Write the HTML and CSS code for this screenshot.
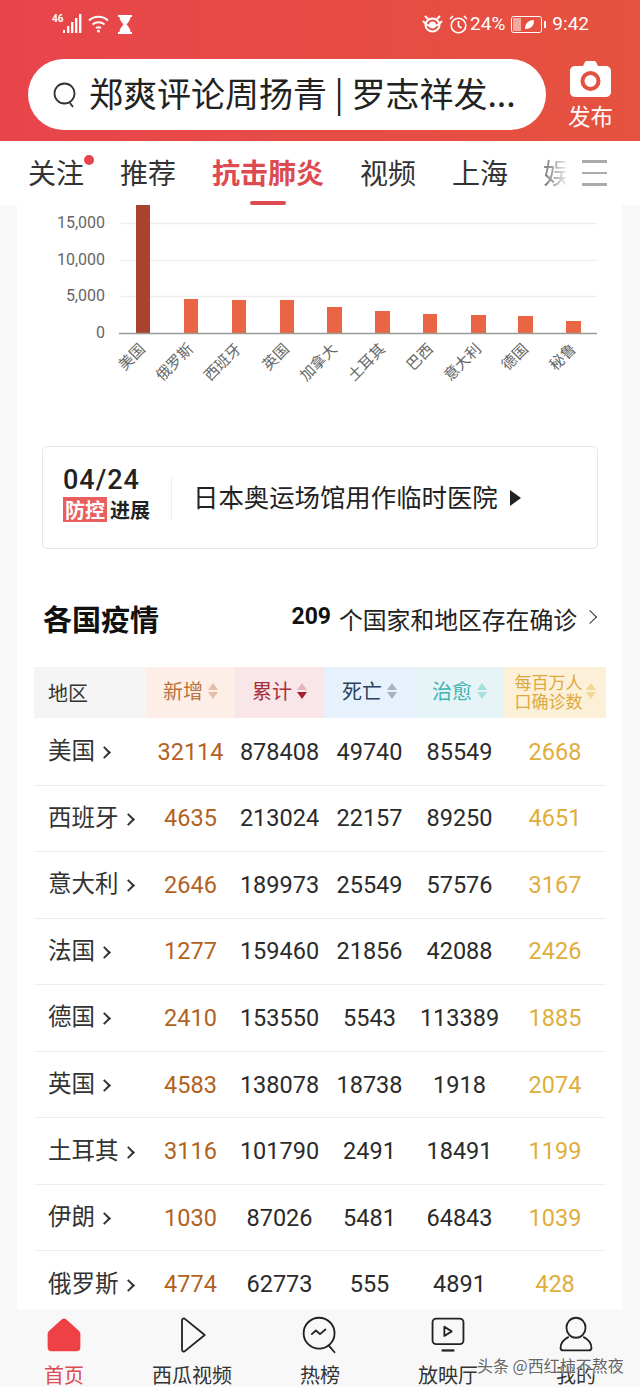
FILE: index.html
```html
<!DOCTYPE html>
<html lang="zh">
<head>
<meta charset="utf-8">
<title>各国疫情</title>
<link rel="stylesheet" href="styles.css">
</head>
<body>
<header class="top">
    <div class="status">
        <div class="status-left">
            <span class="net">46</span>
            <svg width="20" height="20" viewBox="0 0 20 20" fill="#fff"><rect x="0" y="16" width="2" height="3"/><rect x="4" y="12" width="2.4" height="7"/><rect x="8" y="8" width="2.4" height="11"/><rect x="12" y="4" width="2.4" height="15"/><rect x="16" y="0" width="2.4" height="19"/></svg>
            <svg class="wifi" width="22" height="20" viewBox="0 0 22 20" fill="none" stroke="#fff" stroke-width="2"><path d="M1 6.500C6.500 1.500 14.500 1.500 20 6.500"/><path d="M4.500 10.500C8 7.500 13 7.500 16.500 10.500"/><path d="M8 14C9.500 13 11.500 13 13 14"/><circle cx="10.500" cy="17" r="1.500" fill="#fff" stroke="none"/></svg>
            <svg width="16" height="19" viewBox="0 0 16 19" fill="#fff"><path d="M1 0h14v2h-1.500c0 3-2 5-4 7.500 2 2 4 4.500 4 7.500H15v2H1v-2h1.500c0-3 2-5.500 4-7.500-2-2.500-4-4.500-4-7.500H1z"/></svg>
        </div>
        <div class="status-right">
            <svg width="21" height="18" viewBox="0 0 21 18" fill="none" stroke="#fff" stroke-width="2"><path d="M1 6c5 7 14 7 19 0"/><ellipse cx="10.500" cy="10" rx="7" ry="6.500"/><circle cx="10.500" cy="10" r="2.500" fill="#fff"/><path d="M3 1l3 3M18 1l-3 3"/></svg>
            <svg class="alarm" width="19" height="19" viewBox="0 0 19 19" fill="none" stroke="#fff" stroke-width="1.600"><circle cx="9.500" cy="10.500" r="7.300"/><path d="M9.500 6v5l3 2M1 4l3-3M18 4l-3-3"/></svg>
            <span class="pct">24%</span>
            <svg class="battery" width="35" height="17" viewBox="0 0 35 17"><rect x="0.500" y="0.500" width="30" height="16" rx="2" fill="none" stroke="#fff"/><rect x="2" y="2" width="8" height="13" fill="#fff" opacity="0.5"/><path d="M14 13c0-6 4-9 9-9 0 6-3 9-9 9z" fill="#fff"/><rect x="33" y="5" width="2" height="7" fill="#fff"/></svg>
            <span class="clock">9:42</span>
        </div>
    </div>
    <div class="search-row">
        <div class="search">
            <svg width="26" height="28" viewBox="0 0 26 28" fill="none" stroke="#333" stroke-width="1.800"><circle cx="12.500" cy="12.500" r="10"/><path d="M18 22l3 4"/></svg>
            <span class="search-text">郑爽评论周扬青 | 罗志祥发...</span>
        </div>
        <div class="publish">
            <svg width="41" height="36" viewBox="0 0 41 36"><path d="M5 5h8l2-4c.3-.6.800-1 1.500-1h8c.7 0 1.200.4 1.500 1l2 4h8c2.800 0 5 2.200 5 5v21c0 2.800-2.200 5-5 5H5c-2.800 0-5-2.200-5-5V10c0-2.800 2.200-5 5-5z" fill="#fff"/><circle cx="20.500" cy="20" r="8" fill="none" stroke="#e5503f" stroke-width="4"/></svg>
            <span>发布</span>
        </div>
    </div>
</header>

<nav class="tabs">
    <span class="tab has-dot">关注</span>
    <span class="tab">推荐</span>
    <span class="tab active">抗击肺炎</span>
    <span class="tab">视频</span>
    <span class="tab">上海</span>
    <span class="tab fade">娱</span>
    <div class="menu"><i></i><i></i><i></i></div>
</nav>

<main>
    <div class="card">
        <svg class="chart" width="605" height="241" viewBox="17 205 605 241">
            <g class="grid">
                <path d="M121 223.500H597M121 260.500H597M121 296.500H597"/>
            </g>
            <g class="ticks">
                <text x="105" y="228">15,000</text>
                <text x="105" y="265">10,000</text>
                <text x="105" y="301">5,000</text>
                <text x="105" y="338">0</text>
            </g>
            <rect x="136" y="205" width="14" height="128" fill="#a9432e"/>
            <g fill="#e96544">
                <rect x="184" y="299" width="14" height="34"/>
                <rect x="232" y="300" width="14" height="33"/>
                <rect x="280" y="300" width="14" height="33"/>
                <rect x="327" y="307" width="15" height="26"/>
                <rect x="375" y="311" width="15" height="22"/>
                <rect x="423" y="314" width="14" height="19"/>
                <rect x="471" y="315" width="15" height="18"/>
                <rect x="518" y="316" width="15" height="17"/>
                <rect x="566" y="321" width="15" height="12"/>
            </g>
            <path class="axis" d="M119 333.500H597"/>
            <g class="labels">
                <text transform="translate(146 350) rotate(-45)">美国</text>
                <text transform="translate(194 350) rotate(-45)">俄罗斯</text>
                <text transform="translate(242 350) rotate(-45)">西班牙</text>
                <text transform="translate(290 350) rotate(-45)">英国</text>
                <text transform="translate(338 350) rotate(-45)">加拿大</text>
                <text transform="translate(386 350) rotate(-45)">土耳其</text>
                <text transform="translate(434 350) rotate(-45)">巴西</text>
                <text transform="translate(482 350) rotate(-45)">意大利</text>
                <text transform="translate(529 350) rotate(-45)">德国</text>
                <text transform="translate(577 350) rotate(-45)">秘鲁</text>
            </g>
        </svg>

        <div class="notice">
            <div class="notice-date">
                <div class="date">04/24</div>
                <div class="tag"><b>防控</b><span>进展</span></div>
            </div>
            <div class="notice-text">日本奥运场馆用作临时医院</div>
            <span class="notice-arrow"></span>
        </div>

        <div class="section-head">
            <h2>各国疫情</h2>
            <div class="section-more"><b>209</b><span>个国家和地区存在确诊</span><i class="chev"></i></div>
        </div>

        <div class="table">
            <div class="thead">
                <div class="th th-area">地区</div>
                <div class="th th-new">新增<span class="sort"></span></div>
                <div class="th th-total">累计<span class="sort"></span></div>
                <div class="th th-dead">死亡<span class="sort"></span></div>
                <div class="th th-cure">治愈<span class="sort"></span></div>
                <div class="th th-rate"><span class="two">每百万人<br>口确诊数</span><span class="sort"></span></div>
            </div>
            <div class="row"><div class="area">美国<i></i></div><div class="new">32114</div><div>878408</div><div>49740</div><div>85549</div><div class="rate">2668</div></div>
            <div class="row"><div class="area">西班牙<i></i></div><div class="new">4635</div><div>213024</div><div>22157</div><div>89250</div><div class="rate">4651</div></div>
            <div class="row"><div class="area">意大利<i></i></div><div class="new">2646</div><div>189973</div><div>25549</div><div>57576</div><div class="rate">3167</div></div>
            <div class="row"><div class="area">法国<i></i></div><div class="new">1277</div><div>159460</div><div>21856</div><div>42088</div><div class="rate">2426</div></div>
            <div class="row"><div class="area">德国<i></i></div><div class="new">2410</div><div>153550</div><div>5543</div><div>113389</div><div class="rate">1885</div></div>
            <div class="row"><div class="area">英国<i></i></div><div class="new">4583</div><div>138078</div><div>18738</div><div>1918</div><div class="rate">2074</div></div>
            <div class="row"><div class="area">土耳其<i></i></div><div class="new">3116</div><div>101790</div><div>2491</div><div>18491</div><div class="rate">1199</div></div>
            <div class="row"><div class="area">伊朗<i></i></div><div class="new">1030</div><div>87026</div><div>5481</div><div>64843</div><div class="rate">1039</div></div>
            <div class="row"><div class="area">俄罗斯<i></i></div><div class="new">4774</div><div>62773</div><div>555</div><div>4891</div><div class="rate">428</div></div>
        </div>
    </div>
</main>

<footer class="bottom">
    <div class="nav-item current">
        <svg width="44" height="44" viewBox="0 0 44 44"><path d="M20 4.500c1.200-1 2.800-1 4 0l14 12.500c1 .9 2 2 2 3.500V36c0 2.200-1.800 4-4 4H8c-2.200 0-4-1.800-4-4V20.500c0-1.500 1-2.600 2-3.500z" fill="#ee4146"/></svg>
        <span>首页</span>
    </div>
    <div class="nav-item">
        <svg width="44" height="44" viewBox="0 0 44 44" fill="none" stroke="#222" stroke-width="2"><path d="M11 6c0-2 2-3 3.500-1.500L36 22 14.500 39.500C13 41 11 40 11 38z" stroke-linejoin="round"/></svg>
        <span>西瓜视频</span>
    </div>
    <div class="nav-item">
        <svg width="44" height="44" viewBox="0 0 44 44" fill="none" stroke="#222" stroke-width="2"><circle cx="21" cy="20" r="17"/><path d="M13 21l4.500-4 4.500 4 6-5" stroke-linecap="round" stroke-linejoin="round"/><path d="M32 34l6 7" stroke-linecap="round"/></svg>
        <span>热榜</span>
    </div>
    <div class="nav-item">
        <svg width="44" height="44" viewBox="0 0 44 44" fill="none" stroke="#222" stroke-width="2"><rect x="5" y="4" width="34" height="28" rx="4"/><path d="M18 13v10l8-5z" stroke-linejoin="round"/><path d="M15 39h14" stroke-width="2.500"/></svg>
        <span>放映厅</span>
    </div>
    <div class="nav-item">
        <svg width="44" height="44" viewBox="0 0 44 44" fill="none" stroke="#222" stroke-width="2"><ellipse cx="22" cy="14" rx="10.500" ry="11"/><path d="M14 24C8 27 5 32 5 36c0 2 1 3 3 3h28c2 0 3-1 3-3 0-4-3-9-9-12"/></svg>
        <span>我的</span>
    </div>
    <div class="watermark">头条 @西红柿不熬夜</div>
</footer>
</body>
</html>
```

FILE: styles.css
```css
html, body {
    margin: 0;
    padding: 0;
    height: 1387px;
    overflow: hidden;
}

body {
    display: flex;
    flex-direction: column;
    width: 640px;
    background: #f8f8f8;
    color: #222;
    font-family: "Noto Sans CJK SC", Roboto, sans-serif;
}

.top {
    flex: none;
    height: 141px;
    background: linear-gradient(to right, #e8454b 0%, #e5523f 100%);
    color: #fff;
}

.status {
    display: flex;
    justify-content: space-between;
    align-items: center;
    height: 48px;
    padding: 0 51px 0 52px;
}

.status-left, .status-right {
    display: flex;
    align-items: center;
}

.net {
    align-self: flex-start;
    font: bold 10px/10px Roboto, sans-serif;
}

.wifi {
    margin: 0 7px 0 5px;
}

.alarm {
    margin: 0 2px 0 6px;
}

.pct, .clock {
    font: 19px/24px Roboto, sans-serif;
}

.battery {
    margin: 0 6px;
}

.search-row {
    display: flex;
    padding: 11px 0 0 28px;
}

.search {
    display: flex;
    align-items: center;
    width: 518px;
    height: 71px;
    box-sizing: border-box;
    padding-left: 24px;
    border-radius: 36px;
    background: #fff;
    color: #222;
}

.search-text {
    margin: -3px 0 0 11px;
    font-size: 34px;
    line-height: 40px;
    white-space: nowrap;
}

.publish {
    display: flex;
    flex-direction: column;
    align-items: center;
    margin: 2px 0 0 22px;
    font-size: 22.500px;
    line-height: 30px;
}

.publish span {
    margin-top: 3px;
}

.tabs {
    flex: none;
    display: flex;
    align-items: center;
    gap: 36px;
    height: 64px;
    box-sizing: border-box;
    padding-left: 28px;
    background: #fff;
    font-size: 28px;
    color: #333;
}

.tab {
    position: relative;
    height: 64px;
    line-height: 62px;
    white-space: nowrap;
}

.has-dot::after {
    content: "";
    position: absolute;
    top: 14px;
    right: -10px;
    width: 10px;
    height: 10px;
    border-radius: 50%;
    background: #e8424a;
}

.active {
    color: #dd4a50;
    font-weight: bold;
}

.active::after {
    content: "";
    position: absolute;
    left: 38px;
    bottom: 0;
    width: 36px;
    height: 4px;
    border-radius: 2px;
    background: #dd4a50;
}

.fade {
    margin-left: -1px;
    color: transparent;
    background: linear-gradient(to right, #777 0%, #ddd 75%, #fff 86%);
    -webkit-background-clip: text;
    background-clip: text;
}

.menu {
    display: flex;
    flex-direction: column;
    gap: 9px;
    margin-left: -25px;
    width: 25px;
}

.menu i {
    height: 2.500px;
    background: #aaa;
}

main {
    flex: 1;
    overflow: hidden;
    padding: 0 18px 0 17px;
}

.card {
    background: #fff;
    height: 100%;
}

.chart {
    display: block;
}

.grid path {
    stroke: #eee;
    stroke-width: 1.500;
    fill: none;
}

.axis {
    stroke: #999;
    stroke-width: 1.500;
    fill: none;
}

.ticks text {
    font: 16px Roboto, sans-serif;
    fill: #666;
    text-anchor: end;
}

.labels text {
    font: 15px "Noto Sans CJK SC", sans-serif;
    fill: #666;
    text-anchor: end;
}

.notice {
    display: flex;
    align-items: center;
    height: 103px;
    box-sizing: border-box;
    margin: 0 24px 0 25px;
    padding-left: 20px;
    border: 1px solid #e6e6e6;
    border-radius: 5px;
}

.notice-date {
    width: 108px;
    height: 44px;
    margin-top: 1px;
    border-right: 1px solid #eee;
    display: flex;
    flex-direction: column;
}

.date {
    flex: none;
    font: 500 27px/24px Roboto, sans-serif;
    letter-spacing: 1px;
    margin-top: -8px;
    color: #222;
}

.tag {
    flex: none;
    display: flex;
    align-items: center;
    font-size: 20px;
    line-height: 25px;
    margin-top: 5px;
}

.tag b {
    padding: 0 2px;
    background: #e95f5f;
    color: #fff;
}

.tag span {
    margin-left: 3px;
    font-weight: bold;
}

.notice-text {
    margin: -3px 0 0 21px;
    font-size: 25.400px;
    line-height: 32px;
    white-space: nowrap;
}

.notice-arrow {
    width: 0;
    height: 0;
    margin-left: 12px;
    border-left: 11px solid #222;
    border-top: 8px solid transparent;
    border-bottom: 8px solid transparent;
}

.section-head {
    display: flex;
    justify-content: space-between;
    align-items: center;
    height: 40px;
    margin: 49px 24px 29px 26px;
}

.section-head h2 {
    margin: 0;
    font-size: 29px;
    line-height: 40px;
    font-weight: bold;
    color: #111;
}

.section-more {
    display: flex;
    align-items: center;
    font-size: 23.800px;
    color: #222;
}

.section-more b {
    margin-right: 8px;
    margin-top: -4px;
    font: bold 23px Roboto, sans-serif;
    color: #111;
}

.chev {
    width: 9px;
    height: 9px;
    margin: -2px 3px 0 8px;
    border-top: 1.500px solid #333;
    border-right: 1.500px solid #333;
    transform: rotate(45deg);
}

.table {
    margin: 0 16px 0 17px;
}

.thead, .row {
    display: grid;
    grid-template-columns: 112px 89px 89px 91px 89px 102px;
    align-items: center;
}

.thead {
    margin-bottom: 1px;
}

.th {
    display: flex;
    align-items: center;
    justify-content: center;
    height: 51px;
    box-sizing: border-box;
    padding-bottom: 4px;
    font-size: 20px;
    gap: 5px;
}

.th-area {
    justify-content: flex-start;
    padding: 0 0 0 14px;
    background: #f5f5f5;
    color: #333;
}

.th-new { background: #fdeee8; color: #b9733a; --up: #e6bda6; --down: #e6bda6; }
.th-total { background: #f9e6e8; color: #a5303c; --up: #e3b4ba; --down: #a5202c; }
.th-dead { background: #e6f1fc; color: #29425e; --up: #a9b2bf; --down: #a9b2bf; }
.th-cure { background: #e6f4f8; color: #3fb5b5; --up: #a5e0da; --down: #a5e0da; }
.th-rate { background: #fdf0d8; color: #dba93e; --up: #f2d796; --down: #f2d796; gap: 3px; }

.two {
    font-size: 17px;
    line-height: 19px;
    text-align: center;
}

.sort {
    display: flex;
    flex-direction: column;
    gap: 2px;
}

.sort::before, .sort::after {
    content: "";
    width: 0;
    height: 0;
    border-left: 5.500px solid transparent;
    border-right: 5.500px solid transparent;
}

.sort::before {
    border-bottom: 7px solid var(--up);
}

.sort::after {
    border-top: 7px solid var(--down);
}

.row {
    height: 66.550px;
    box-sizing: border-box;
    border-bottom: 1px solid #eee;
    text-align: center;
    font: 23.500px/32px Roboto, sans-serif;
    color: #2b2b2b;
}

.row .area {
    display: flex;
    align-items: center;
    margin-top: -5px;
    padding-left: 14px;
    font-family: "Noto Sans CJK SC", sans-serif;
    font-size: 23.500px;
    color: #333;
}

.area i {
    width: 7px;
    height: 7px;
    margin: 7px 0 0 5px;
    border-top: 2.500px solid #333;
    border-right: 2.500px solid #333;
    transform: rotate(45deg);
}

.row .new {
    color: #b2621f;
}

.row .rate {
    color: #e0ae3c;
}

.bottom {
    position: relative;
    flex: none;
    display: grid;
    grid-template-columns: repeat(5, 128px);
    height: 78px;
    overflow: hidden;
    background: #f8f8f8;
}

.nav-item {
    display: flex;
    flex-direction: column;
    align-items: center;
    padding-top: 6px;
    font-size: 20px;
    line-height: 22px;
    color: #333;
}

.nav-item svg {
    flex: none;
    height: 40px;
}

.nav-item span {
    margin-top: 9px;
    white-space: nowrap;
}

.current {
    color: #dd4a50;
}

.watermark {
    position: absolute;
    top: 44px;
    left: 477px;
    font-size: 16px;
    line-height: 24px;
    white-space: nowrap;
    color: #666;
    text-shadow: 0 0 2px #fff, 0 0 2px #fff;
}
```
